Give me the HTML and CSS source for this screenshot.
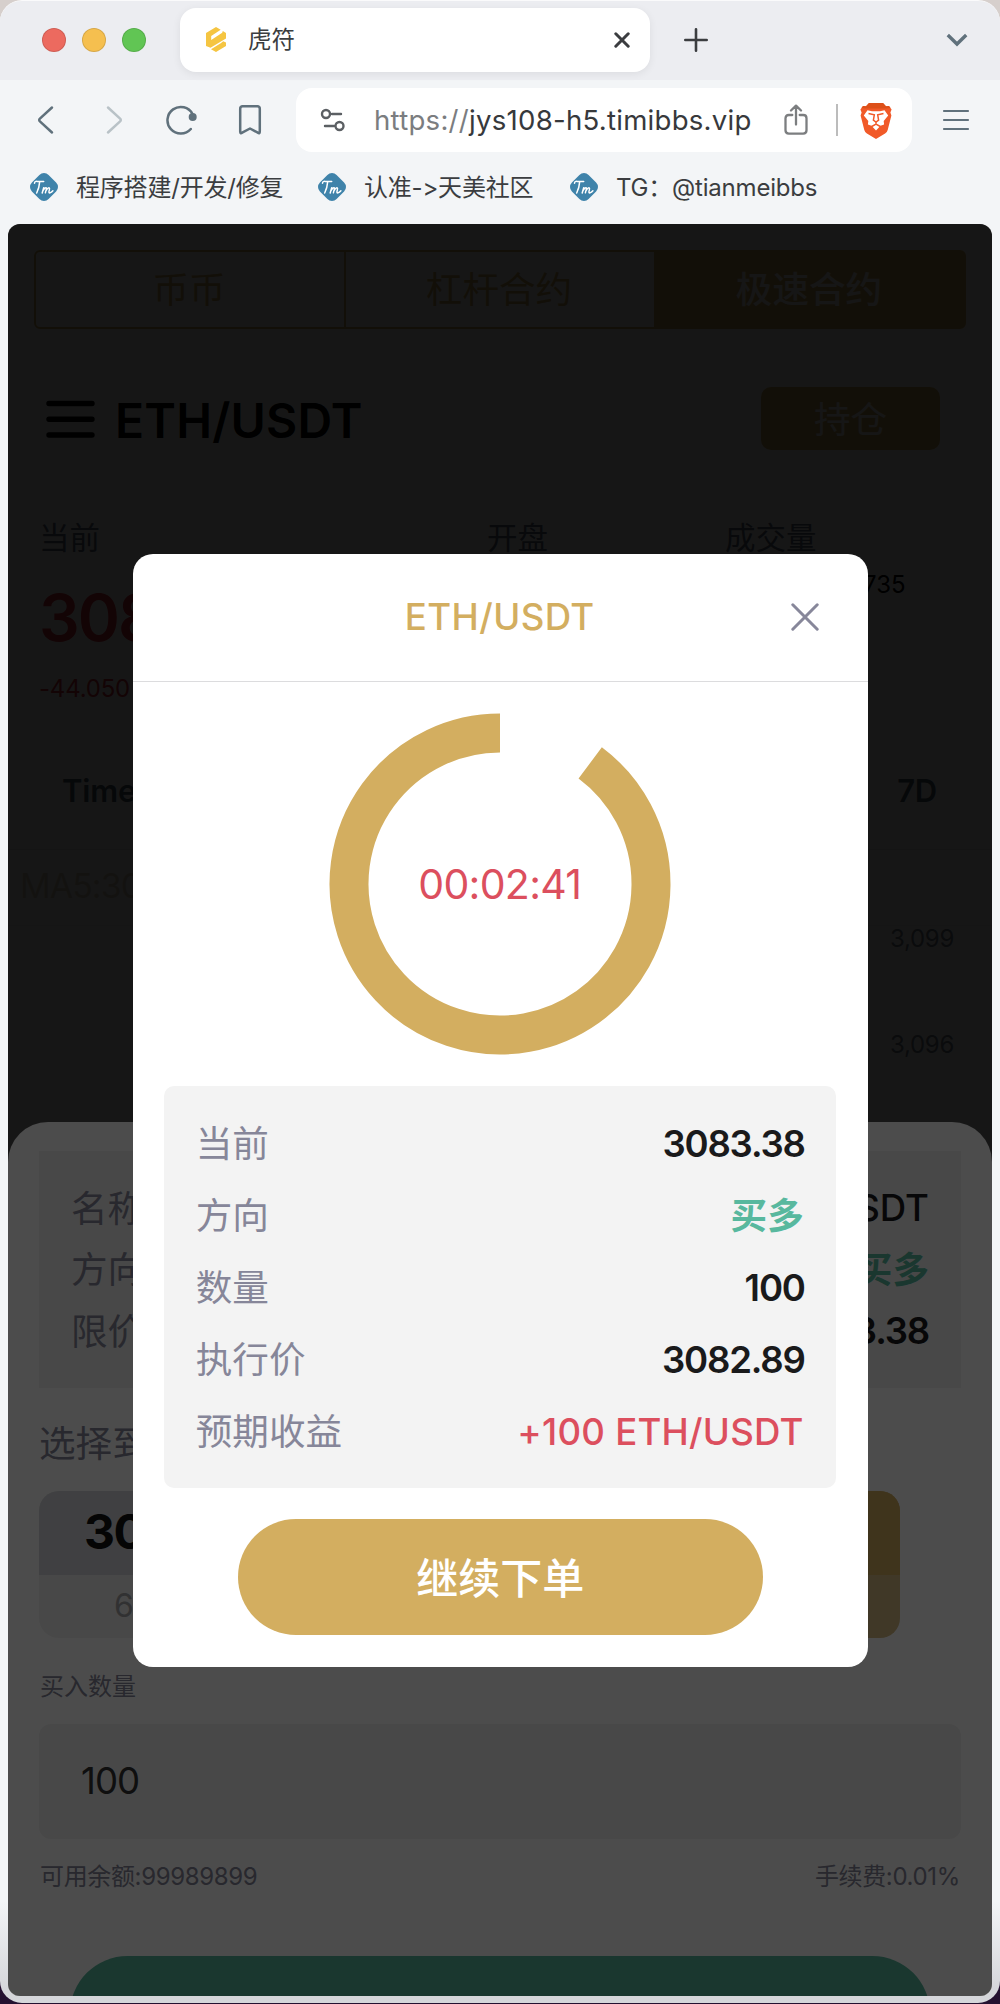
FILE: index.html
```html
<!DOCTYPE html>
<html lang="zh-CN">
<head>
<meta charset="utf-8">
<title>虎符</title>
<link rel="stylesheet" href="styles.css">
</head>
<body>
<svg width="0" height="0" class="defs">
  <symbol id="tm" viewBox="0 0 30 30">
    <rect x="3.200" y="3.200" width="23.600" height="23.600" rx="6.500" fill="#3f83aa" transform="rotate(45 15 15)"/>
    <g fill="none" stroke="#fff" stroke-width="1.500" stroke-linecap="round" stroke-linejoin="round">
      <path d="M5.500 11.200c0-1.600 1.200-2 2.800-1.800l6.400.1M10.700 9.600c-.3 4-1.300 8-3 11.400"/>
      <path d="M13.200 21l1.500-5.300M14 18.700c1-2 2.200-3.200 3.100-2.900.9.400-.3 3-.7 5M16.900 19c1.100-2.200 2.500-3.500 3.400-3.100 1 .5-.8 3.400-.3 4.600.4.900 2.400 0 3.900-1.700"/>
    </g>
  </symbol>
</svg>
<div class="window">
  <header class="tabstrip">
    <div class="lights"><i class="light red"></i><i class="light amber"></i><i class="light green"></i></div>
    <div class="tab">
      <svg width="20" height="25" viewBox="0 0 20 25" fill="#f5c542"><path d="M0 6L10 0l4.700 2.800L5.200 9v4l11-7.200.6-1.800L20 6v5.500L4.500 20.800 0 19z"/><path d="M17.200 14.200l2.800 1.300V19l-10 6-5-2.800 9.700-5.900z"/></svg>
      <span class="tab-title">虎符</span>
      <svg class="tab-close" width="16" height="16" viewBox="0 0 16 16" stroke="#3b3d40" stroke-width="3" stroke-linecap="round"><path d="M1.800 1.800l12.400 12.400M14.200 1.800L1.800 14.200"/></svg>
    </div>
    <svg class="plus" width="24" height="24" viewBox="0 0 24 24" stroke="#3b3d40" stroke-width="2.600" stroke-linecap="round"><path d="M12 1.300v21.400M1.300 12h21.400"/></svg>
    <svg class="chev" width="22" height="14" viewBox="0 0 22 14" fill="none" stroke="#60717c" stroke-width="3.400"><path d="M1.800 2L11 11l9.200-9"/></svg>
  </header>
  <div class="toolbar">
    <div class="nav">
      <svg width="30" height="30" viewBox="0 0 30 30" fill="none" stroke="#60717c" stroke-width="2.500" stroke-linecap="round" stroke-linejoin="round"><path d="M21 2.500L8.900 13.700q-1.400 1.300 0 2.600L21 27.500"/></svg>
      <svg width="30" height="30" viewBox="0 0 30 30" fill="none" stroke="#b9c2c7" stroke-width="2.500" stroke-linecap="round" stroke-linejoin="round"><path d="M9 2.500l12.100 11.200q1.400 1.300 0 2.600L9 27.500"/></svg>
      <svg width="32" height="30" viewBox="0 0 32 30" fill="none" stroke="#60717c" stroke-width="2.500" stroke-linecap="round"><path d="M24.800 24A13.300 13.300 0 1 1 26.500 9"/><circle cx="26.700" cy="12" r="4" fill="#60717c" stroke="none"/></svg>
      <svg width="24" height="30" viewBox="0 0 24 30" fill="none" stroke="#60717c" stroke-width="2.500" stroke-linejoin="round"><path d="M2.200 3.800q0-2.600 2.600-2.600h14.400q2.600 0 2.600 2.600V26.500q0 2.600-2 1.200L12 23.500l-7.800 4.200q-2 1.400-2-1.200z"/></svg>
    </div>
    <div class="urlbar">
      <svg width="26" height="26" viewBox="0 0 26 26" fill="none" stroke="#5b5f63" stroke-width="2.400" stroke-linecap="round"><circle cx="7" cy="7" r="4"/><path d="M13 7h9M6 19h9"/><circle cx="20.500" cy="19" r="4"/></svg>
      <span class="url"><span class="scheme">https://</span>jys108-h5.timibbs.vip</span>
      <svg class="share" width="24" height="32" viewBox="0 0 24 32" fill="none" stroke="#7c7e80" stroke-width="2.300" stroke-linecap="round" stroke-linejoin="round"><path d="M8.300 11H4.800Q1.500 11 1.500 14.300v12Q1.500 29.600 4.800 29.600h14.400q3.300 0 3.300-3.300v-12q0-3.300-3.300-3.300h-3.500M12 20.500V2M7 6.500L12 1.600l5 4.900"/></svg>
      <i class="bar"></i>
      <svg class="lion" width="32" height="37" viewBox="0 0 32 37"><path fill="#f15a29" d="M9 1h14l3 3.200 3-.3 2.600 3.600-1.200 3 1 3-3.700 14.500q-.6 2.300-2.600 3.500L16 37l-9.100-5.500q-2-1.200-2.600-3.500L.6 13.500l1-3-1.200-3L3 3.900l3 .3z"/><path fill="#dd5019" d="M9 1h14l3 3.200 3-.3 1.500 2.100-4.500.5H6L1.500 6 3 3.900l3 .3z"/><path fill="#fff" d="M7.500 8.300l4.500.9h8l4.500-.9 3.700 5.200-4.500 5.400.4 3.500-3.600 1.400L16 28.500l-4.500-4.700-3.600-1.400.4-3.500-4.500-5.400z"/><path fill="none" stroke="#f15a29" stroke-width="1.500" d="M8.500 11.500l5.800 1.300-.9 5.400 2.600 1.800 2.600-1.800-.9-5.400 5.800-1.300M16 20v2.500M10 25.500l6-3.500 6 3.500"/></svg>
    </div>
    <svg class="menu" width="28" height="22" viewBox="0 0 28 22" stroke="#60717c" stroke-width="2.200" stroke-linecap="round"><path d="M2 2h24M2 11h24M2 20h24"/></svg>
  </div>
  <nav class="bookmarks">
    <span class="bm b1"><svg width="30" height="30"><use href="#tm"/></svg><span>程序搭建/开发/修复</span></span>
    <span class="bm b2"><svg width="30" height="30"><use href="#tm"/></svg><span>认准-&gt;天美社区</span></span>
    <span class="bm b3"><svg width="30" height="30"><use href="#tm"/></svg><span>TG：@tianmeibbs</span></span>
  </nav>

  <main class="screen">
    <section class="market">
      <div class="modes"><span>币币</span><span>杠杆合约</span><span class="on">极速合约</span></div>
      <div class="pair">
        <svg width="49" height="38" viewBox="0 0 49 38" stroke="#000" stroke-width="5.400" stroke-linecap="round"><path d="M3 3.500h43M3 19.200h43M3 35h43"/></svg>
        <h1>ETH/USDT</h1>
        <button class="hold">持仓</button>
      </div>
      <div class="stats">
        <div><span class="lbl">当前</span><b class="price">308</b><span class="chg">-44.050</span></div>
        <div><span class="lbl">开盘</span></div>
        <div><span class="lbl">成交量</span><span class="vol">735</span></div>
      </div>
      <div class="periods"><span>Time</span><span>7D</span></div>
      <div class="ma">MA5:30</div>
      <div class="axis"><span>3,099</span><span>3,096</span></div>
    </section>
    <div class="scrim"></div>

    <section class="sheet">
      <dl class="order">
        <div><dt>名称</dt><dd>USDT</dd></div>
        <div><dt>方向</dt><dd class="up">买多</dd></div>
        <div><dt>限价</dt><dd class="num">3.38</dd></div>
      </dl>
      <div class="pick">选择到</div>
      <div class="cards">
        <div class="card"><b>30</b><span>6</span></div>
        <div class="card gold"><b></b><span></span></div>
      </div>
      <div class="small">买入数量</div>
      <div class="amount">100</div>
      <div class="balance"><span>可用余额:99989899</span><span>手续费:0.01%</span></div>
      <div class="submit"></div>
    </section>
    <div class="scrim"></div>

    <section class="modal">
      <header class="modal-head">
        <h2>ETH/USDT</h2>
        <svg class="close" width="28" height="28" viewBox="0 0 28 28" stroke="#87879a" stroke-width="3" stroke-linecap="round"><path d="M1.800 1.800l24.400 24.400M26.200 1.800L1.800 26.200"/></svg>
      </header>
      <div class="ring">
        <svg width="342" height="342" viewBox="-171 -171 342 342" fill="none" stroke="#d3ae60" stroke-width="39"><path d="M90.200 -121.100A151 151 0 1 1 0 -151"/></svg>
        <span class="time">00:02:41</span>
      </div>
      <dl class="detail">
        <div><dt>当前</dt><dd class="num">3083.38</dd></div>
        <div><dt>方向</dt><dd class="up">买多</dd></div>
        <div><dt>数量</dt><dd class="num">100</dd></div>
        <div><dt>执行价</dt><dd class="num">3082.89</dd></div>
        <div><dt>预期收益</dt><dd class="gain">+100 ETH/USDT</dd></div>
      </dl>
      <button class="again">继续下单</button>
    </section>
  </main>
</div>
</body>
</html>
```
FILE: styles.css
```css
* { box-sizing: border-box; margin: 0; padding: 0; }
body {
  width: 1000px; height: 2004px; overflow: hidden;
  background: linear-gradient(#d6cfcc 0 1000px, #241030 1000px);
  font-family: Inter, "Noto Sans CJK SC", sans-serif;
  font-feature-settings: "calt" 0;
}
svg { display: block; flex: none; }
.defs { position: absolute; }
button { border: 0; font: inherit; }
.window {
  height: 2003px; border-radius: 22px; overflow: hidden;
  background: linear-gradient(#f3f5f7 1900px, #d5d6da 1990px);
  border-top: 1px solid #fafafb;
}
.tabstrip { height: 79px; background: #ecedf1; display: flex; align-items: center; padding: 0 32px 2px 42px; }
.lights { display: flex; gap: 16px; width: 138px; }
.light { width: 24px; height: 24px; border-radius: 50%; border: 1px solid rgba(0,0,0,.12); }
.red { background: #ec6a5f; }
.amber { background: #f5bf4f; }
.green { background: #61c554; }
.tab {
  width: 470px; height: 64px; background: #fff; border-radius: 16px;
  box-shadow: 0 2px 8px rgba(0,0,0,.07);
  display: flex; align-items: center; padding: 0 20px 0 26px;
}
.tab-title { margin-left: 22px; padding-bottom: 4px; font-size: 23.500px; color: #3b3d40; flex: 1; }
.plus { margin-left: 34px; }
.chev { margin-left: auto; }
.toolbar { height: 80px; display: flex; align-items: center; }
.nav { display: flex; align-items: center; width: 296px; padding-left: 31px; }
.nav svg:nth-child(2) { margin-left: 38px; }
.nav svg:nth-child(3) { margin-left: 37px; }
.nav svg:nth-child(4) { margin-left: 40px; }
.urlbar { width: 616px; height: 64px; background: #fff; border-radius: 16px; display: flex; align-items: center; padding-left: 23px; }
.url { margin-left: 29px; width: 379px; font-size: 27.600px; letter-spacing: .25px; color: #37393c; white-space: nowrap; }
.scheme { color: #7b7d80; }
.share { margin-left: 31px; }
.bar { width: 2px; height: 32px; background: #bcbcbc; margin-left: 28px; }
.lion { margin-left: 22px; }
.menu { margin-left: 30px; }
.bookmarks { height: 64px; padding: 0 0 10px 29px; display: flex; align-items: center; font-size: 24px; color: #3b3d40; }
.bm { display: flex; align-items: center; gap: 17px; white-space: nowrap; }
.bm span { padding-bottom: 4px; letter-spacing: -.2px; }
.b1 { width: 288px; }
.b2 { width: 252px; }

.screen { position: relative; width: 984px; height: 1772px; margin: 0 auto; border-radius: 12px; overflow: hidden; background: #fff; }
.scrim { position: absolute; inset: 0; background: rgba(0,0,0,.7); }
.market { padding-top: 26px; }
.modes { height: 79px; margin: 0 26px; border: 2px solid #d3ae60; border-radius: 6px; display: grid; grid-template-columns: 308px 310px 1fr; font-size: 36.600px; color: #d3ae60; }
.modes span { display: flex; align-items: center; justify-content: center; padding: 0 2px 4px 0; }
.modes span + span { border-left: 2px solid #d3ae60; }
.modes .on { background: #d3ae60; color: #fff; font-weight: 500; }
.pair { margin: 58px 52px 0 38px; height: 63px; display: flex; align-items: center; }
.pair h1 { margin-left: 20px; padding-top: 3px; font-size: 48px; font-weight: 600; letter-spacing: .2px; color: #000; }
.hold { margin-left: auto; width: 179px; height: 63px; padding-bottom: 3px; border-radius: 10px; background: #d3ae60; color: #fff; font-size: 36.600px; }
.stats { margin: 73px 0 0 31px; display: grid; grid-template-columns: 448px 238px 1fr; height: 200px; }
.stats > div { display: flex; flex-direction: column; align-items: flex-start; }
.lbl { font-size: 30.500px; line-height: 29px; height: 30px; color: #5e6a80; }
.price { font-size: 64px; line-height: 64px; margin-top: 33px; font-weight: 600; letter-spacing: -2px; color: #dc2f3c; }
.chg { font-size: 24px; line-height: 24px; margin-top: 27px; letter-spacing: -.2px; color: #dc2f3c; }
.vol { font-size: 24px; line-height: 24px; margin: 20px 0 0 138px; color: #000; }
.periods { height: 127px; padding: 52px 55px 0 54px; border-bottom: 1px solid #e3e3e3; display: flex; justify-content: space-between; font-size: 31px; line-height: 31px; font-weight: 600; letter-spacing: -.2px; color: #4f5b70; }
.ma { height: 76px; line-height: 72px; padding-left: 12px; border-bottom: 1px solid #f0f0f0; font-size: 34px; letter-spacing: -1px; color: #dcd3bd; }
.axis { display: flex; flex-direction: column; align-items: flex-end; gap: 82px; padding: 1px 38px 0 0; font-size: 24px; line-height: 24px; letter-spacing: -.3px; color: #76808f; }

.sheet { position: absolute; left: 0; right: 0; top: 898px; bottom: 0; padding: 29px 31px 0; background: #fff; border-radius: 40px 40px 0 0; }
.order { height: 237px; padding: 26px 33px 26px 32px; background: #f2f2f2; font-size: 36.600px; }
.order div, .detail div { display: flex; justify-content: space-between; align-items: center; }
.order div { height: 61.600px; }
dt { padding-bottom: 3px; color: #868699; }
dd { padding-top: 1px; color: #1a1a1b; font-weight: 500; }
dd.num { font-weight: 600; letter-spacing: -1.200px; margin-right: -1px; }
dd.up { padding: 0 0 4px; color: #58b89e; font-weight: 700; }
dd.gain { color: #dc4f5e; letter-spacing: .25px; }
.order dd { margin-right: -1px; }
.pick { height: 103px; line-height: 112px; font-size: 36.600px; color: #868699; }
.cards { display: flex; justify-content: space-between; padding-right: 61px; }
.card { width: 266px; height: 147px; border-radius: 20px; overflow: hidden; background: #f2f2f2; display: flex; flex-direction: column; }
.card b { height: 84px; padding-left: 45px; background: #d6d8dc; font-size: 48px; line-height: 82px; letter-spacing: -1.500px; color: #111; }
.card span { padding-left: 75px; font-size: 32px; line-height: 62px; color: #a6a6a8; }
.gold { background: #d5bb82; }
.gold b { background: #d3ae60; }
.small { height: 86px; padding-left: 1px; line-height: 97px; font-size: 24px; color: #868699; }
.amount { height: 115px; padding-left: 42px; line-height: 115px; border-radius: 12px; background: #f2f2f2; font-size: 36.600px; letter-spacing: -1px; color: #333; }
.balance { height: 117px; padding: 0 1px; line-height: 76px; display: flex; justify-content: space-between; font-size: 24px; letter-spacing: -.35px; color: #868699; }
.submit { width: 860px; height: 115px; margin: 0 auto; border-radius: 58px; background: #58b89e; }

.modal { position: absolute; left: 125px; top: 329.500px; width: 734.500px; height: 1113px; background: #fff; border-radius: 20px; display: flex; flex-direction: column; align-items: center; }
.modal-head { align-self: stretch; height: 128px; border-bottom: 1px solid #dcdcde; display: grid; grid-template-columns: 1fr auto 1fr; align-items: center; padding-right: 49px; padding-left: 48px; }
.modal-head h2 { grid-column: 2; font-size: 36.600px; font-weight: 500; letter-spacing: .4px; color: #d3ae60; }
.close { justify-self: end; }
.ring { display: grid; place-items: center; margin: 31.500px 1px 0 0; }
.ring > * { grid-area: 1 / 1; }
.time { font-size: 41px; letter-spacing: -.7px; color: #dc4f5e; }
.detail { width: 672px; height: 402px; margin: 31px 1px 0 0; padding: 21px 32px; border-radius: 10px; background: #f3f3f3; font-size: 36.600px; }
.detail div { height: 72px; }
.again { width: 525px; height: 116px; padding-bottom: 4px; margin-top: 31px; border-radius: 58px; background: #d3ae60; color: #fff; font-size: 42px; font-weight: 500; }
```
